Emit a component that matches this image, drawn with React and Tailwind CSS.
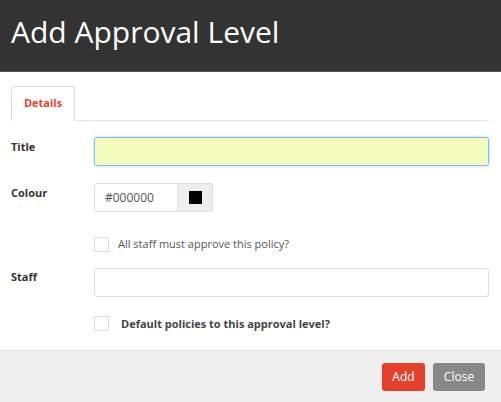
import React from 'react';

const App = () => {
  return (
    <div className="w-[501px] h-[402px] bg-white flex flex-col overflow-hidden" style={{ fontFamily: '"Open Sans", sans-serif' }}>
      {/* Header */}
      <div className="h-[72px] bg-[#333333] border-b border-[#555] flex items-center px-[11px]">
        <h1 className="text-[30px] text-white leading-none -mt-[7px]">Add Approval Level</h1>
      </div>

      {/* Body */}
      <div className="flex-1 px-[11px] pt-[14px]">
        <div className="flex border-b border-[#e5e5e5] h-[35px] mr-[1px]">
          <div className="w-[64px] h-[35px] border border-[#ddd] border-b-white bg-white rounded-t-[3px] flex items-center justify-center -mb-[1px]">
            <span className="text-[11px] font-bold text-[#e8412c]">Details</span>
          </div>
        </div>

        {/* Title */}
        <div className="flex items-center mt-[16px]">
          <label className="w-[83px] text-[11px] font-bold text-[#333] -mt-[9px]">Title</label>
          <input
            className="flex-1 h-[29px] mr-[1px] bg-[#f5fdbe] border border-[#80bdff] rounded-[3px] shadow-[0_0_3px_rgba(102,175,233,0.6)] outline-none px-2 text-[12px]"
            defaultValue=""
          />
        </div>

        {/* Colour */}
        <div className="flex items-center mt-[17px]">
          <label className="w-[83px] text-[11px] font-bold text-[#333] -mt-[9px]">Colour</label>
          <div className="flex h-[29px]">
            <div className="w-[84px] border border-[#ddd] rounded-l-[3px] flex items-center px-[10px] text-[12px] text-[#555]">
              #000000
            </div>
            <div className="w-[35px] bg-[#eee] border border-l-0 border-[#ddd] rounded-r-[3px] flex items-center justify-center">
              <div className="w-[13px] h-[13px] bg-black" />
            </div>
          </div>
        </div>

        {/* All staff checkbox */}
        <div className="flex items-center mt-[24px] pl-[83px]">
          <div className="w-[15px] h-[15px] border border-[#ddd] bg-white" />
          <span className="ml-[9px] text-[11px] text-[#555]">All staff must approve this policy?</span>
        </div>

        {/* Staff */}
        <div className="flex items-center mt-[15px]">
          <label className="w-[83px] text-[11px] font-bold text-[#333] -mt-[9px]">Staff</label>
          <div className="flex-1 h-[29px] mr-[1px] border border-[#ddd] rounded-[3px] bg-white" />
        </div>

        {/* Default checkbox */}
        <div className="flex items-center mt-[19px] pl-[83px]">
          <div className="w-[15px] h-[15px] border border-[#ddd] bg-white" />
          <span className="ml-[12px] text-[11px] font-bold text-[#444]">Default policies to this approval level?</span>
        </div>
      </div>

      {/* Footer */}
      <div className="h-[52px] bg-[#eeeeee] border-t border-[#e2e2e2] flex items-center justify-end gap-[8px] pr-[16px]">
        <button className="w-[43px] h-[28px] bg-[#e5402b] text-white text-[12px] rounded-[3px]">Add</button>
        <button className="w-[52px] h-[28px] bg-[#888888] text-white text-[12px] rounded-[3px]">Close</button>
      </div>
    </div>
  );
};

export default App;
